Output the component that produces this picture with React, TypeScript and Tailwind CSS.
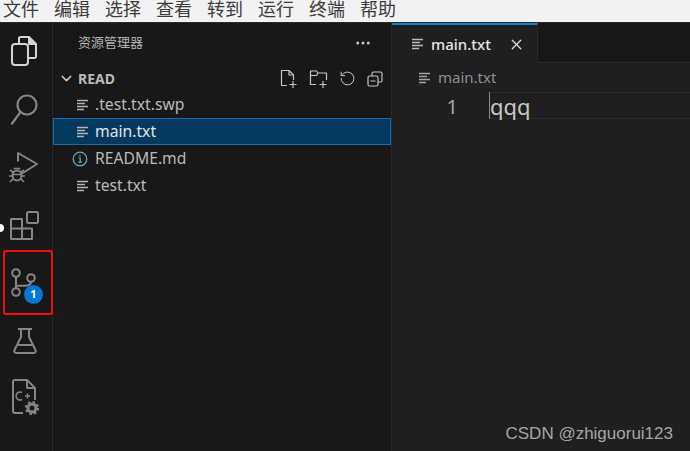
import { ChevronDown, X, RotateCw, Ellipsis } from 'lucide-react';

const uiFont = "font-['Noto_Sans','Noto_Sans_CJK_SC',sans-serif]";

const menus = ['文件', '编辑', '选择', '查看', '转到', '运行', '终端', '帮助'];

const LinesIcon = ({ className = '' }: { className?: string }) => (
  <svg width="16" height="16" viewBox="0 0 16 16" className={className} fill="none" stroke="currentColor" strokeWidth="1.3">
    <path d="M2 3.500h11M2 6.500h8M2 9.500h11M2 12.500h7" />
  </svg>
);

const InfoIcon = () => (
  <svg width="16" height="16" viewBox="0 0 16 16" fill="none" stroke="#6fa8c8" strokeWidth="1.200">
    <circle cx="8" cy="8" r="6.800" />
    <path d="M6.500 7h1.700v4M6.500 11.200h3.200M8 4.200v1.400" />
  </svg>
);

const FilesIcon = () => (
  <svg width="26" height="30" viewBox="0 0 26 30" fill="none" stroke="#d4d4d4" strokeWidth="2" strokeLinejoin="round">
    <path d="M8 8V2.500a1.500 1.500 0 0 1 1.500-1.500H18l7 7v12.500a1.500 1.500 0 0 1-1.500 1.500H17" />
    <path d="M18 1v7h7" fill="#d4d4d4" />
    <rect x="1" y="8" width="16" height="21" rx="3" />
  </svg>
);

const SearchIcon = () => (
  <svg width="27" height="31" viewBox="0 0 27 31" fill="none" stroke="#85858a" strokeWidth="2.200">
    <circle cx="16" cy="11" r="9.500" />
    <path d="M9.500 18L1 29.500" strokeLinecap="round" />
  </svg>
);

const DebugIcon = () => (
  <svg width="29" height="31" viewBox="0 0 29 31" fill="none" stroke="#85858a" strokeWidth="2" strokeLinejoin="round">
    <path d="M9 9.500V1l19 11-15 9.500" />
    <ellipse cx="8" cy="23.500" rx="4.500" ry="5" />
    <path d="M4.500 16.500h7M1 18l3.500 2.500M15 18l-3.500 2.500M0 24h3.500M12.500 24H16M1 30l3-3M15 30l-3-3M3.500 22.500h9" strokeWidth="1.600" />
  </svg>
);

const ExtensionsIcon = () => (
  <svg width="30" height="29" viewBox="0 0 30 29" fill="none" stroke="#85858a" strokeWidth="2" strokeLinejoin="round">
    <rect x="18" y="1" width="11" height="11" rx="1.500" />
    <path d="M2 8h11v9.500h10V28H2zM2 17.500h11V28" />
  </svg>
);

const GitIcon = () => (
  <svg width="26" height="29" viewBox="0 0 26 29" fill="none" stroke="#85858a" strokeWidth="2">
    <circle cx="5" cy="5" r="3.800" />
    <circle cx="5" cy="24" r="3.800" />
    <circle cx="20" cy="10" r="3.800" />
    <path d="M5 8.800v11.400M20 13.800c0 3-2 4-6 4H5" />
  </svg>
);

const FlaskIcon = () => (
  <svg width="24" height="26" viewBox="0 0 24 26" fill="none" stroke="#85858a" strokeWidth="2" strokeLinejoin="round">
    <path d="M5 1h14M8 1v8L1.500 22a2 2 0 0 0 1.800 3h17.400a2 2 0 0 0 1.800-3L16 9V1" />
    <path d="M5 17h14" />
  </svg>
);

const RemoteIcon = () => (
  <svg width="27" height="36" viewBox="0 0 27 36" fill="none" stroke="#85858a" strokeWidth="2" strokeLinejoin="round">
    <path d="M11 34H3a2 2 0 0 1-2-2V3a2 2 0 0 1 2-2h12l8 8v12" />
    <path d="M15 1v8h8" />
    <path d="M10 13.500a4 4 0 1 0 0 7M13 17h5M15.500 14.500v5" strokeWidth="1.600" />
    <circle cx="20" cy="29" r="4" strokeWidth="3" />
    <circle cx="20" cy="29" r="6" strokeWidth="2.200" strokeDasharray="2.400 2.300" />
  </svg>
);

const NewFileIcon = () => (
  <svg width="18" height="20" viewBox="0 0 18 20" fill="none" stroke="#c5c5c5" strokeWidth="1.200" strokeLinejoin="round">
    <path d="M7 16.500H1.500V1.500H9l4.500 4.500v5" />
    <path d="M9 1.500V6h4.500M13 12v7M9.500 15.500h7" />
  </svg>
);

const NewFolderIcon = () => (
  <svg width="19" height="20" viewBox="0 0 19 20" fill="none" stroke="#c5c5c5" strokeWidth="1.200" strokeLinejoin="round">
    <path d="M7 15.500H1.500V2h6l1.500 2h8.500v7M1.500 6.500h6L9 4" />
    <path d="M14 12v7M10.500 15.500h7" />
  </svg>
);

const CollapseIcon = () => (
  <svg width="16" height="16" viewBox="0 0 16 16" fill="none" stroke="#c5c5c5" strokeWidth="1.200">
    <rect x="1" y="5" width="10" height="10" rx="1.500" />
    <path d="M5 5V2.500A1.500 1.500 0 0 1 6.500 1h7A1.500 1.500 0 0 1 15 2.500v7a1.500 1.500 0 0 1-1.500 1.500H11M3.500 10h5" />
  </svg>
);

const FileRow = ({ name, selected, info }: { name: string; selected?: boolean; info?: boolean }) => (
  <div
    className={`flex h-[27px] items-center border pl-[18px] text-[15.700px] ${
      selected ? 'border-[#0f6cb8] bg-[#04395e] text-[#e2e2e2]' : 'border-transparent text-[#b9b9b9]'
    }`}
  >
    <span className="flex w-[23px] shrink-0 text-[#b4b4b4]">{info ? <InfoIcon /> : <LinesIcon className="ml-[3px]" />}</span>
    {name}
  </div>
);

export default function App() {
  return (
    <div className={`relative flex h-[451px] w-[690px] flex-col overflow-hidden bg-[#1f1f1f] ${uiFont}`}>
      <div className="flex h-[22px] shrink-0 gap-[15px] bg-[#f2f2f2] pl-[3px] text-[18px] leading-[18px] text-[#3c3c3c]">
        {menus.map((m) => (
          <span key={m} className="w-9">{m}</span>
        ))}
      </div>
      <div className="flex min-h-0 flex-1 border-t border-[#2b2b2b]">
        <div className="relative flex w-[53px] shrink-0 flex-col items-center gap-[4px] border-r border-[#2b2b2b] bg-[#181818] pt-[1px]">
          <div className="mr-[4px] flex h-[54px] items-center"><FilesIcon /></div>
          <div className="mr-[3px] flex h-[54px] items-center"><SearchIcon /></div>
          <div className="mr-[5px] flex h-[54px] items-center"><DebugIcon /></div>
          <div className="mr-[4px] flex h-[54px] items-center"><ExtensionsIcon /></div>
          <div className="relative mr-[4px] flex h-[54px] items-center pb-[2px]">
            <GitIcon />
            <span className="absolute left-[13px] top-[29px] flex h-[19px] w-[19px] items-center justify-center rounded-full bg-[#0078d4] text-[11px] font-bold text-white">1</span>
          </div>
          <div className="mr-[3px] flex h-[54px] items-center"><FlaskIcon /></div>
          <div className="mr-[1px] flex h-[54px] items-center pb-[4px]"><RemoteIcon /></div>
        </div>
        <div className="flex w-[339px] shrink-0 flex-col border-r border-[#2b2b2b] bg-[#181818]">
          <div className="flex h-[40px] items-center justify-between pl-[25px] pr-[19px] text-[13px] text-[#b4b4b4]">
            资源管理器
            <Ellipsis size={18} className="text-[#c5c5c5]" />
          </div>
          <div className="flex h-[28px] items-center justify-between pb-0 pl-[5px] pr-[8px] pt-[3px] text-[14px] font-bold text-[#b9b9b9]">
            <span className="flex items-center gap-[3px]">
              <ChevronDown size={17} className="text-[#c5c5c5]" />
              READ
            </span>
            <span className="flex items-center gap-[11px]">
              <NewFileIcon />
              <NewFolderIcon />
              <RotateCw size={17} strokeWidth={1.400} className="-scale-x-100 text-[#c5c5c5]" />
              <CollapseIcon />
            </span>
          </div>
          <FileRow name=".test.txt.swp" />
          <FileRow name="main.txt" selected />
          <FileRow name="README.md" info />
          <FileRow name="test.txt" />
        </div>
        <div className="flex min-w-0 flex-1 flex-col">
          <div className="flex h-[40px] shrink-0 bg-[#181818]">
            <div className="flex w-[146px] items-center border-r border-t-2 border-r-[#2b2b2b] border-t-[#0f7fd4] bg-[#1f1f1f] pl-[18px] text-[15px] font-medium text-[#e6e6e6]">
              <LinesIcon className="mr-[5px] text-[#b9b9b9]" />
              main.txt
              <X size={17} strokeWidth={1.800} className="ml-[17px] text-[#e0e0e0]" />
            </div>
            <div className="flex-1 border-b border-[#2b2b2b]" />
          </div>
          <div className="flex h-[29px] items-center pl-[25px] text-[15px] text-[#8f8f8f]">
            <LinesIcon className="mr-[5px] text-[#a0a0a0]" />
            main.txt
          </div>
          <div className="flex h-[27px] items-center">
            <span className="w-[98px] pr-[32px] pt-[2px] text-right text-[20px] text-[#a8a8a8]">1</span>
            <div className="flex h-[27px] flex-1 items-center border-y border-[#2b2b2b] text-[22px] text-[#c8c8c8]">
              <span className="-ml-[1px] border-l border-[#8a8a8a] pt-[2px] leading-[25px]">qqq</span>
            </div>
          </div>
        </div>
      </div>
      <span className="absolute left-[-4px] top-[224px] size-[8px] rounded-full bg-white" />
      <div className="absolute left-[3px] top-[250px] h-[65px] w-[50px] rounded-[3px] border-2 border-[#f01010]" />
      <span className="absolute right-[17px] top-[421px] text-[17px] text-[#a6a6a6] font-['Liberation_Sans',sans-serif]">CSDN @zhiguorui123</span>
    </div>
  );
}
